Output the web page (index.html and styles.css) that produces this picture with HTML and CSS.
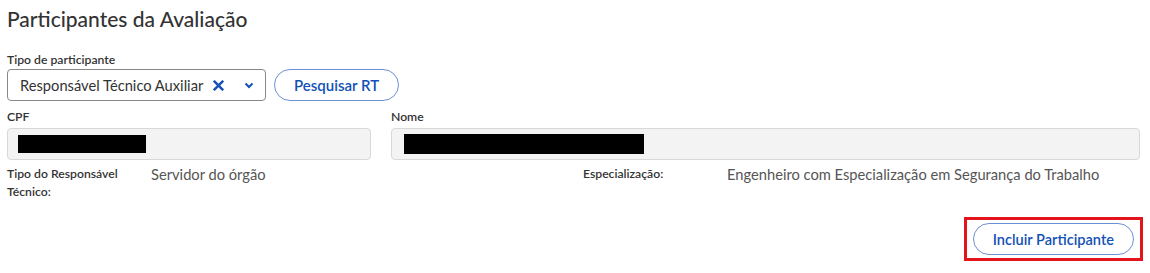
FILE: index.html
```html
<!DOCTYPE html>
<html lang="pt-BR">
<head>
<meta charset="utf-8">
<link rel="stylesheet" href="styles.css">
</head>
<body>
<div class="page">
  <h1 class="title">Participantes da Avaliação</h1>

  <div class="field">
    <label class="label">Tipo de participante</label>
    <div class="select-row">
      <div class="select">
        <span class="select-text">Responsável Técnico Auxiliar</span>
        <svg class="icon-x" width="11" height="11" viewBox="0 0 10 10"><path d="M1.5 1.5 L8.5 8.5 M8.5 1.5 L1.5 8.5" stroke="#1351b4" stroke-width="2.2" stroke-linecap="square"/></svg>
        <svg class="icon-chev" width="10" height="7" viewBox="0 0 10 7"><path d="M1.5 1.5 L5 5 L8.5 1.5" fill="none" stroke="#1351b4" stroke-width="2"/></svg>
      </div>
      <button class="btn">Pesquisar RT</button>
    </div>
  </div>

  <div class="inputs">
    <div class="field">
      <label class="label">CPF</label>
      <div class="input"><span class="redact redact-cpf"></span></div>
    </div>
    <div class="field">
      <label class="label">Nome</label>
      <div class="input"><span class="redact redact-nome"></span></div>
    </div>
  </div>

  <div class="info">
    <div class="info-item">
      <span class="info-label">Tipo do Responsável Técnico:</span>
      <span class="info-value">Servidor do órgão</span>
    </div>
    <div class="info-item">
      <span class="info-label">Especialização:</span>
      <span class="info-value">Engenheiro com Especialização em Segurança do Trabalho</span>
    </div>
  </div>

  <div class="actions">
    <div class="highlight">
      <button class="btn btn-wide">Incluir Participante</button>
    </div>
  </div>
</div>
</body>
</html>
```

FILE: styles.css
```css
* { box-sizing: border-box; }
html, body { margin: 0; padding: 0; background: #fff; }
body {
  font-family: "Lato", "Open Sans", sans-serif;
  color: #333;
}
.page {
  width: 1150px;
  height: 273px;
  padding: 5px 7px 0 7px;
  display: flex;
  flex-direction: column;
}
.title {
  margin: 0;
  font-size: 21px;
  line-height: 28px;
  font-weight: 500;
  color: #333;
}
.field { display: flex; flex-direction: column; }
.title + .field { margin-top: 20px; }
.label {
  font-size: 12.2px;
  font-weight: 600;
  line-height: 14px;
  color: #333;
  margin-bottom: 2px;
}
.select-row { display: flex; gap: 8px; align-items: center; }
.select {
  width: 259px;
  height: 32px;
  border: 1px solid #888;
  border-radius: 4px;
  display: flex;
  align-items: center;
  padding: 0 11px 0 12px;
}
.select-text { font-size: 14.7px; color: #333; }
.icon-x { margin-left: 10px; }
.icon-chev { margin-left: auto; }
.btn {
  font-family: inherit;
  height: 32px;
  padding: 0 19px;
  border: 1px solid #6d8fd3;
  border-radius: 16px;
  background: #fff;
  color: #1351b4;
  font-size: 15px;
  font-weight: 600;
}
.inputs {
  display: grid;
  grid-template-columns: 364px 1fr;
  column-gap: 20px;
  margin-top: 9px;
  margin-right: 3px;
}
.inputs .label { margin-bottom: 4px; }
.input {
  height: 32px;
  background: #f3f3f3;
  border: 1px solid #d8d8d8;
  border-radius: 4px;
  display: flex;
  align-items: center;
  padding-left: 10px;
}
.redact { display: block; background: #000; }
.redact-cpf { width: 128px; height: 18px; }
.redact-nome { width: 240px; height: 20px; margin-left: 2px; }
.info {
  display: grid;
  grid-template-columns: 576px 1fr;
  margin-top: 5px;
}
.info-item { display: grid; grid-template-columns: 144px 1fr; }
.info-label {
  font-size: 12.2px;
  font-weight: 600;
  line-height: 18px;
  color: #333;
  padding-right: 20px;
}
.info-value {
  font-size: 14.7px;
  line-height: 18px;
  color: #555;
}
.actions {
  display: flex;
  justify-content: flex-end;
  margin-top: 16px;
}
.highlight {
  border: 3px solid #e3141b;
  padding: 3px 6px 3px 6px;
}
.btn-wide { height: 32px; padding: 0 19px; font-size: 14.6px; }
```
